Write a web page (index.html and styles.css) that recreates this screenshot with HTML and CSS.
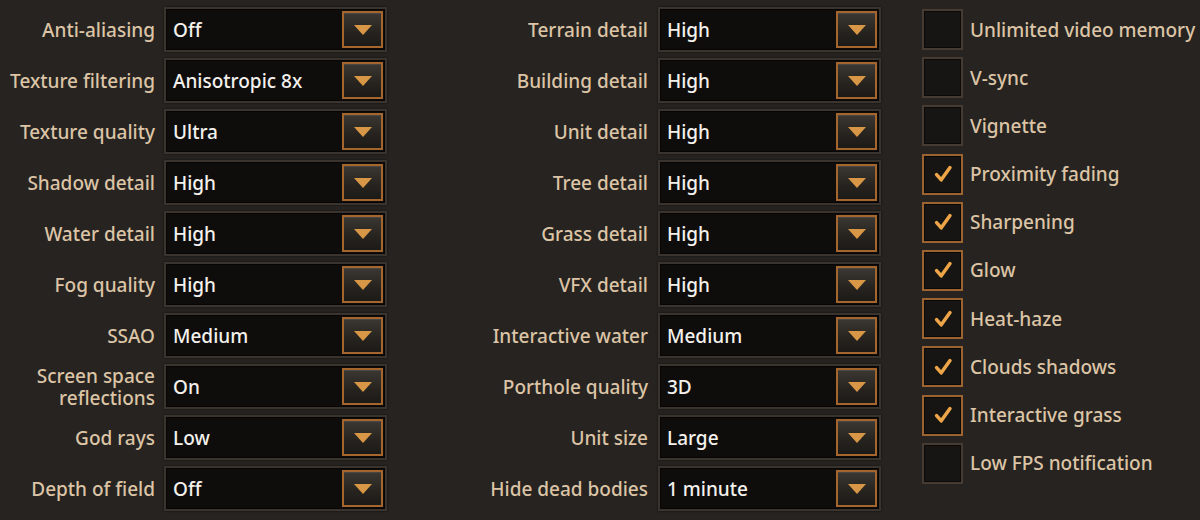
FILE: index.html
```html
<!DOCTYPE html>
<html lang="en">
<head>
  <meta charset="UTF-8">
  <title>Graphics settings</title>
  <link rel="stylesheet" href="styles.css">
</head>
<body>
  <div class="settings">
    <div class="column column-left">
      <div class="label">Anti-aliasing</div>
      <div class="select"><span class="value">Off</span><span class="arrow"></span></div>
      <div class="label">Texture filtering</div>
      <div class="select"><span class="value">Anisotropic 8x</span><span class="arrow"></span></div>
      <div class="label">Texture quality</div>
      <div class="select"><span class="value">Ultra</span><span class="arrow"></span></div>
      <div class="label">Shadow detail</div>
      <div class="select"><span class="value">High</span><span class="arrow"></span></div>
      <div class="label">Water detail</div>
      <div class="select"><span class="value">High</span><span class="arrow"></span></div>
      <div class="label">Fog quality</div>
      <div class="select"><span class="value">High</span><span class="arrow"></span></div>
      <div class="label">SSAO</div>
      <div class="select"><span class="value">Medium</span><span class="arrow"></span></div>
      <div class="label">Screen space<br>reflections</div>
      <div class="select"><span class="value">On</span><span class="arrow"></span></div>
      <div class="label">God rays</div>
      <div class="select"><span class="value">Low</span><span class="arrow"></span></div>
      <div class="label">Depth of field</div>
      <div class="select"><span class="value">Off</span><span class="arrow"></span></div>
    </div>

    <div class="column column-middle">
      <div class="label">Terrain detail</div>
      <div class="select"><span class="value">High</span><span class="arrow"></span></div>
      <div class="label">Building detail</div>
      <div class="select"><span class="value">High</span><span class="arrow"></span></div>
      <div class="label">Unit detail</div>
      <div class="select"><span class="value">High</span><span class="arrow"></span></div>
      <div class="label">Tree detail</div>
      <div class="select"><span class="value">High</span><span class="arrow"></span></div>
      <div class="label">Grass detail</div>
      <div class="select"><span class="value">High</span><span class="arrow"></span></div>
      <div class="label">VFX detail</div>
      <div class="select"><span class="value">High</span><span class="arrow"></span></div>
      <div class="label">Interactive water</div>
      <div class="select"><span class="value">Medium</span><span class="arrow"></span></div>
      <div class="label">Porthole quality</div>
      <div class="select"><span class="value">3D</span><span class="arrow"></span></div>
      <div class="label">Unit size</div>
      <div class="select"><span class="value">Large</span><span class="arrow"></span></div>
      <div class="label">Hide dead bodies</div>
      <div class="select"><span class="value">1 minute</span><span class="arrow"></span></div>
    </div>

    <div class="checks">
      <div class="check"><span class="box"></span>Unlimited video memory</div>
      <div class="check"><span class="box"></span>V-sync</div>
      <div class="check"><span class="box"></span>Vignette</div>
      <div class="check on"><span class="box"><svg viewBox="0 0 24 24"><path d="M6.5 12.5 L10.5 17 L18 6.5"/></svg></span>Proximity fading</div>
      <div class="check on"><span class="box"><svg viewBox="0 0 24 24"><path d="M6.5 12.5 L10.5 17 L18 6.5"/></svg></span>Sharpening</div>
      <div class="check on"><span class="box"><svg viewBox="0 0 24 24"><path d="M6.5 12.5 L10.5 17 L18 6.5"/></svg></span>Glow</div>
      <div class="check on"><span class="box"><svg viewBox="0 0 24 24"><path d="M6.5 12.5 L10.5 17 L18 6.5"/></svg></span>Heat-haze</div>
      <div class="check on"><span class="box"><svg viewBox="0 0 24 24"><path d="M6.5 12.5 L10.5 17 L18 6.5"/></svg></span>Clouds shadows</div>
      <div class="check on"><span class="box"><svg viewBox="0 0 24 24"><path d="M6.5 12.5 L10.5 17 L18 6.5"/></svg></span>Interactive grass</div>
      <div class="check"><span class="box"></span>Low FPS notification</div>
    </div>
  </div>
</body>
</html>
```

FILE: styles.css
```css
body {
  margin: 0;
  background: #262320;
  font-family: "Noto Sans", "Open Sans", sans-serif;
  font-size: 19px;
  font-weight: 500;
  height: 520px;
  overflow: hidden;
}
.settings {
  display: flex;
  padding-top: 7px;
}
.column {
  display: grid;
  grid-template-rows: repeat(10, 45px);
  row-gap: 6px;
  column-gap: 9px;
  align-items: center;
}
.column-left {
  grid-template-columns: 155px 223px;
}
.column-middle {
  margin-left: 13px;
  grid-template-columns: 248px 223px;
  column-gap: 10px;
}
.label {
  color: #dcc4a6;
  text-align: right;
  line-height: 22px;
  white-space: nowrap;
}
.select {
  height: 45px;
  box-sizing: border-box;
  border: 2px solid #3a332e;
  background: #0e0d0c;
  box-shadow: inset 0 0 0 1px #070605, 0 0 2px rgba(0,0,0,0.6);
  display: flex;
  align-items: center;
  padding: 0 2px 0 7px;
}
.value {
  flex: 1;
  color: #f4f1ec;
}
.arrow {
  width: 41px;
  height: 37px;
  box-sizing: border-box;
  border: 2px solid #a4662c;
  background: linear-gradient(#3b3733, #26231f 60%, #1c1a17);
  box-shadow: inset 0 1px 0 rgba(255,255,255,0.08);
  display: flex;
  align-items: center;
  justify-content: center;
}
.arrow::after {
  content: "";
  border-left: 9px solid transparent;
  border-right: 9px solid transparent;
  border-top: 10px solid #d79746;
}
.checks {
  margin-left: 41px;
  padding-top: 2px;
  display: flex;
  flex-direction: column;
  gap: 7.2px;
}
.check {
  display: flex;
  align-items: center;
  gap: 7px;
  height: 41px;
  color: #dcc4a6;
  white-space: nowrap;
}
.box {
  width: 41px;
  height: 41px;
  box-sizing: border-box;
  border: 2px solid #453b33;
  background: #171513;
  box-shadow: inset 0 0 0 1px #0b0a09;
  display: flex;
  align-items: center;
  justify-content: center;
}
.check.on .box {
  border-color: #9a6330;
}
.box svg {
  width: 28px;
  height: 28px;
  fill: none;
  stroke: #eea548;
  stroke-width: 3;
  stroke-linecap: round;
  stroke-linejoin: round;
}
```
